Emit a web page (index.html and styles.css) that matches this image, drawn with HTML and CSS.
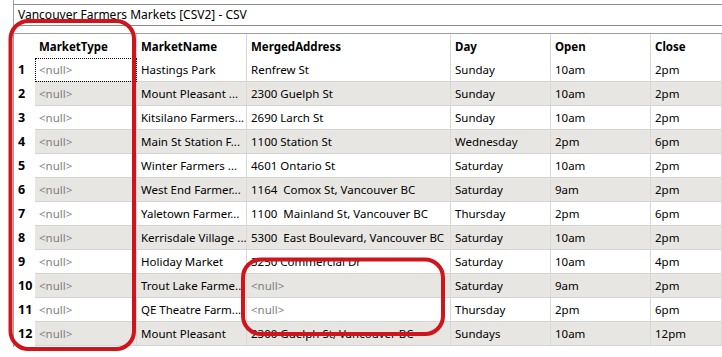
FILE: index.html
```html
<!DOCTYPE html>
<html lang="en">
<head>
    <meta charset="UTF-8">
    <title>Vancouver Farmers Markets [CSV2] - CSV</title>
    <link rel="stylesheet" href="styles.css">
</head>
<body>
    <div class="window">
        <div class="title-bar">Vancouver Farmers Markets [CSV2] - CSV</div>

        <div class="grid">
            <div class="row head">
                <div class="num"></div>
                <div class="cell">MarketType</div>
                <div class="cell">MarketName</div>
                <div class="cell">MergedAddress</div>
                <div class="cell">Day</div>
                <div class="cell">Open</div>
                <div class="cell">Close</div>
            </div>
            <div class="row">
                <div class="num">1</div>
                <div class="cell null focus">&lt;null&gt;</div>
                <div class="cell">Hastings Park</div>
                <div class="cell">Renfrew St</div>
                <div class="cell">Sunday</div>
                <div class="cell">10am</div>
                <div class="cell">2pm</div>
            </div>
            <div class="row alt">
                <div class="num">2</div>
                <div class="cell null">&lt;null&gt;</div>
                <div class="cell">Mount Pleasant ...</div>
                <div class="cell">2300 Guelph St</div>
                <div class="cell">Sunday</div>
                <div class="cell">10am</div>
                <div class="cell">2pm</div>
            </div>
            <div class="row">
                <div class="num">3</div>
                <div class="cell null">&lt;null&gt;</div>
                <div class="cell">Kitsilano Farmers...</div>
                <div class="cell">2690 Larch St</div>
                <div class="cell">Sunday</div>
                <div class="cell">10am</div>
                <div class="cell">2pm</div>
            </div>
            <div class="row alt">
                <div class="num">4</div>
                <div class="cell null">&lt;null&gt;</div>
                <div class="cell">Main St Station F...</div>
                <div class="cell">1100 Station St</div>
                <div class="cell">Wednesday</div>
                <div class="cell">2pm</div>
                <div class="cell">6pm</div>
            </div>
            <div class="row">
                <div class="num">5</div>
                <div class="cell null">&lt;null&gt;</div>
                <div class="cell">Winter Farmers ...</div>
                <div class="cell">4601 Ontario St</div>
                <div class="cell">Saturday</div>
                <div class="cell">10am</div>
                <div class="cell">2pm</div>
            </div>
            <div class="row alt">
                <div class="num">6</div>
                <div class="cell null">&lt;null&gt;</div>
                <div class="cell">West End Farmer...</div>
                <div class="cell">1164  Comox St, Vancouver BC</div>
                <div class="cell">Saturday</div>
                <div class="cell">9am</div>
                <div class="cell">2pm</div>
            </div>
            <div class="row">
                <div class="num">7</div>
                <div class="cell null">&lt;null&gt;</div>
                <div class="cell">Yaletown Farmer...</div>
                <div class="cell">1100  Mainland St, Vancouver BC</div>
                <div class="cell">Thursday</div>
                <div class="cell">2pm</div>
                <div class="cell">6pm</div>
            </div>
            <div class="row alt">
                <div class="num">8</div>
                <div class="cell null">&lt;null&gt;</div>
                <div class="cell">Kerrisdale Village ...</div>
                <div class="cell">5300  East Boulevard, Vancouver BC</div>
                <div class="cell">Saturday</div>
                <div class="cell">10am</div>
                <div class="cell">2pm</div>
            </div>
            <div class="row">
                <div class="num">9</div>
                <div class="cell null">&lt;null&gt;</div>
                <div class="cell">Holiday Market</div>
                <div class="cell">3250 Commercial Dr</div>
                <div class="cell">Saturday</div>
                <div class="cell">10am</div>
                <div class="cell">4pm</div>
            </div>
            <div class="row alt">
                <div class="num">10</div>
                <div class="cell null">&lt;null&gt;</div>
                <div class="cell">Trout Lake Farme...</div>
                <div class="cell null">&lt;null&gt;</div>
                <div class="cell">Saturday</div>
                <div class="cell">9am</div>
                <div class="cell">2pm</div>
            </div>
            <div class="row">
                <div class="num">11</div>
                <div class="cell null">&lt;null&gt;</div>
                <div class="cell">QE Theatre Farm...</div>
                <div class="cell null">&lt;null&gt;</div>
                <div class="cell">Thursday</div>
                <div class="cell">2pm</div>
                <div class="cell">6pm</div>
            </div>
            <div class="row alt">
                <div class="num">12</div>
                <div class="cell null">&lt;null&gt;</div>
                <div class="cell">Mount Pleasant</div>
                <div class="cell">2300 Guelph St, Vancouver BC</div>
                <div class="cell">Sundays</div>
                <div class="cell">10am</div>
                <div class="cell">12pm</div>
            </div>
        </div>
    </div>

    <!-- hand-drawn highlight marks over the grid -->
    <svg class="marks" width="722" height="357" viewBox="0 0 722 357">
        <rect x="10.5" y="21" width="123.5" height="328" rx="18" />
        <rect x="243" y="259.5" width="200" height="74.5" rx="18" />
    </svg>
</body>
</html>
```

FILE: styles.css
```css
body {
    margin: 0;
    font-family: "Noto Sans", "Open Sans", sans-serif;
    font-size: 11.5px;
    color: #000;
    background-color: white;
}
.window {
    padding-top: 4px;
    margin-left: 13px;
    border-left: 1px solid #a0a0a0;
    height: 343px;
}
.title-bar {
    height: 20px;
    line-height: 20px;
    padding-left: 4px;
    font-size: 12px;
    border-top: 1px solid #8c8c8c;
    border-bottom: 1px solid #8c8c8c;
    white-space: nowrap;
}
.grid {
    margin-top: 7px;
    border-top: 1px solid #a0a0a0;
}
.row {
    display: grid;
    grid-template-columns: 21px 102px 110px 204px 100px 100px 1fr;
    height: 24px;
}
.row.alt .cell {
    background-color: #e7e6e3;
}
.cell {
    box-sizing: border-box;
    padding-left: 4px;
    line-height: 23px;
    border-right: 1px solid #d9d9d9;
    border-bottom: 1px solid #d4d4d4;
    white-space: pre;
    overflow: hidden;
}
.row.head .cell {
    font-weight: bold;
    border-bottom: none;
    line-height: 25px;
}
.num {
    font-weight: bold;
    font-size: 12.5px;
    line-height: 24px;
    padding-left: 4px;
}
.null {
    color: #808080;
}
.focus {
    outline: 1px dotted #000;
    outline-offset: -1px;
}
.marks {
    position: absolute;
    top: 0;
    left: 0;
    pointer-events: none;
}
.marks rect {
    fill: none;
    stroke: #d0141c;
    stroke-width: 4;
}
```
